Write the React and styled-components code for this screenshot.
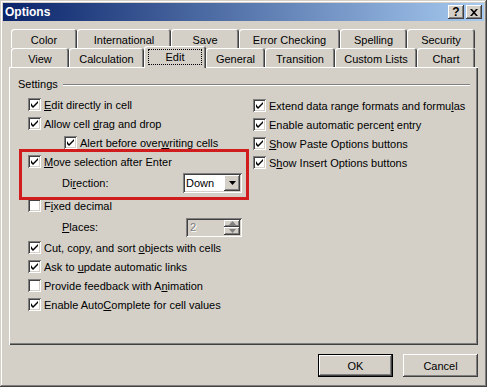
import React from "react";
import styled, { createGlobalStyle } from "styled-components";

const GlobalStyle = createGlobalStyle`
  html, body {
    margin: 0;
    padding: 0;
    background: #d4d0c8;
  }
  body {
    font-family: "Liberation Sans", Arial, sans-serif;
    font-size: 11px;
    color: #000;
  }
`;

const bevelOut = `
  box-shadow: inset -1px -1px #404040, inset 1px 1px #ffffff,
    inset -2px -2px #808080, inset 2px 2px #d4d0c8;
`;

const Window = styled.div`
  width: 487px;
  height: 387px;
  box-sizing: border-box;
  padding: 3px;
  background: #d4d0c8;
  display: flex;
  flex-direction: column;
  box-shadow: inset -1px -1px #404040, inset 1px 1px #d4d0c8,
    inset -2px -2px #808080, inset 2px 2px #ffffff;
`;

const TitleBar = styled.div`
  height: 18px;
  display: flex;
  align-items: center;
  justify-content: space-between;
  padding: 0 2px 0 2px;
  background: linear-gradient(to right, #0a246a, #a6caf0);
`;

const TitleText = styled.span`
  color: #fff;
  font-weight: bold;
  font-size: 12px;
`;

const CaptionButtons = styled.div`
  display: flex;
  gap: 2px;
`;

const CaptionButton = styled.div`
  width: 16px;
  height: 14px;
  background: #d4d0c8;
  ${bevelOut}
  display: flex;
  align-items: center;
  justify-content: center;
  font-weight: bold;
  font-size: 12px;
  line-height: 14px;
`;

const Body = styled.div`
  padding: 8px 6px 0 6px;
  display: flex;
  flex-direction: column;
`;

const TabRows = styled.div`
  padding-left: 2px;
  display: flex;
  flex-direction: column;
  position: relative;
  z-index: 1;
`;

const TabRow = styled.div`
  display: flex;
  height: 19px;
`;

const Tab = styled.div`
  width: ${(p) => p.$w}px;
  height: ${(p) => (p.$active ? 22 : 19)}px;
  margin-top: ${(p) => (p.$active ? -2 : 0)}px;
  box-sizing: border-box;
  flex: none;
  background: #d4d0c8;
  border-radius: 3px 3px 0 0;
  box-shadow: inset 1px 1px #ffffff, inset -1px 0 #404040, inset -2px 0 #808080;
  display: flex;
  align-items: center;
  justify-content: center;
  padding-top: ${(p) => (p.$active ? 0 : 2)}px;
`;

const FocusText = styled.span`
  width: 54px;
  height: 16px;
  box-sizing: border-box;
  border: 1px dotted #000;
  display: flex;
  align-items: center;
  justify-content: center;
`;

const Panel = styled.div`
  height: 278px;
  box-sizing: border-box;
  background: #d4d0c8;
  padding: 9px 0 0 9px;
  box-shadow: inset 1px 1px #ffffff, inset -1px -1px #404040,
    inset -2px -2px #808080;
  display: flex;
  flex-direction: column;
`;

const GroupHeader = styled.div`
  height: 16px;
  display: flex;
  align-items: center;
  gap: 5px;
  margin-right: 8px;
`;

const GroupLine = styled.div`
  flex: 1;
  border-top: 1px solid #808080;
  border-bottom: 1px solid #ffffff;
  margin-top: 1px;
`;

const Columns = styled.div`
  display: grid;
  grid-template-columns: 225px 1fr;
  padding-left: 10px;
  margin-top: 3px;
`;

const Column = styled.div`
  display: flex;
  flex-direction: column;
  position: relative;
  padding-top: ${(p) => p.$offset || 0}px;
`;

const Row = styled.div`
  height: ${(p) => p.$h || 19}px;
  display: flex;
  align-items: center;
  padding-left: ${(p) => p.$indent || 0}px;
  padding-right: ${(p) => p.$right || 0}px;
  justify-content: ${(p) => (p.$spread ? "space-between" : "flex-start")};
  white-space: nowrap;
`;

const Box = styled.span`
  width: 13px;
  height: 13px;
  flex: none;
  box-sizing: border-box;
  background: #fff;
  box-shadow: inset 1px 1px #808080, inset -1px -1px #ffffff,
    inset 2px 2px #404040, inset -2px -2px #d4d0c8;
  display: flex;
  align-items: center;
  justify-content: center;
`;

const Label = styled.span`
  margin-left: 3px;
  color: ${(p) => (p.$disabled ? "#808080" : "#000")};
`;

const Highlight = styled.div`
  position: absolute;
  left: -9px;
  top: 54px;
  width: 230px;
  height: 51px;
  box-sizing: border-box;
  border: 3px solid #d01c1c;
  pointer-events: none;
`;

const Combo = styled.div`
  width: 59px;
  height: 20px;
  box-sizing: border-box;
  background: #fff;
  box-shadow: inset 1px 1px #808080, inset -1px -1px #ffffff,
    inset 2px 2px #404040, inset -2px -2px #d4d0c8;
  display: flex;
  align-items: center;
  padding: 2px;
`;

const ComboText = styled.span`
  flex: 1;
  padding-left: 1px;
`;

const ArrowButton = styled.div`
  width: 16px;
  height: 16px;
  background: #d4d0c8;
  ${bevelOut}
  display: flex;
  align-items: center;
  justify-content: center;
`;

const Spinner = styled.div`
  width: 56px;
  height: 19px;
  box-sizing: border-box;
  background: #d4d0c8;
  box-shadow: inset 1px 1px #808080, inset -1px -1px #ffffff,
    inset 2px 2px #404040, inset -2px -2px #d4d0c8;
  display: flex;
  align-items: stretch;
  padding: 2px;
`;

const SpinText = styled.span`
  flex: 1;
  color: #808080;
  display: flex;
  align-items: center;
  padding-left: 2px;
  text-shadow: 1px 1px #fff;
`;

const SpinButtons = styled.div`
  width: 16px;
  display: flex;
  flex-direction: column;
`;

const SpinButton = styled.div`
  flex: 1;
  background: #d4d0c8;
  ${bevelOut}
  display: flex;
  align-items: center;
  justify-content: center;
`;

const Footer = styled.div`
  display: flex;
  justify-content: flex-end;
  gap: 10px;
  margin-top: 9px;
`;

const Button = styled.div`
  width: 75px;
  height: 23px;
  box-sizing: border-box;
  background: #d4d0c8;
  display: flex;
  align-items: center;
  justify-content: center;
  ${(p) =>
    p.$default
      ? `border: 1px solid #000;
         box-shadow: inset -1px -1px #404040, inset 1px 1px #ffffff,
           inset -2px -2px #808080;`
      : bevelOut}
`;

const Check = () => (
  <svg width="7" height="7" viewBox="0 0 7 7">
    <path d="M0 2 L0 5 L2 7 L7 2 L7 0 L2 5 Z" fill="#000" />
  </svg>
);

const Checkbox = ({ checked, children }) => (
  <>
    <Box>{checked && <Check />}</Box>
    <Label>{children}</Label>
  </>
);

const Tri = ({ up, color = "#000" }) => (
  <svg width="7" height="4" viewBox="0 0 7 4">
    <path d={up ? "M3.5 0 L7 4 L0 4 Z" : "M0 0 L7 0 L3.5 4 Z"} fill={color} />
  </svg>
);

const row1 = [
  ["Color", 66],
  ["International", 94],
  ["Save", 68],
  ["Error Checking", 101],
  ["Spelling", 67],
  ["Security", 68],
];

const row2 = [
  ["View", 58],
  ["Calculation", 75],
  ["Edit", 62],
  ["General", 59],
  ["Transition", 70],
  ["Custom Lists", 82],
  ["Chart", 58],
];

export default function App() {
  return (
    <>
      <GlobalStyle />
      <Window>
        <TitleBar>
          <TitleText>Options</TitleText>
          <CaptionButtons>
            <CaptionButton>?</CaptionButton>
            <CaptionButton>
              <svg width="8" height="7" viewBox="0 0 8 7">
                <path d="M0 0h2l2 2.3L6 0h2L5 3.5L8 7H6L4 4.7L2 7H0l3-3.5z" fill="#000" />
              </svg>
            </CaptionButton>
          </CaptionButtons>
        </TitleBar>
        <Body>
          <TabRows>
            <TabRow>
              {row1.map(([t, w]) => (
                <Tab key={t} $w={w}>{t}</Tab>
              ))}
            </TabRow>
            <TabRow>
              {row2.map(([t, w]) =>
                t === "Edit" ? (
                  <Tab key={t} $w={w} $active>
                    <FocusText>{t}</FocusText>
                  </Tab>
                ) : (
                  <Tab key={t} $w={w}>{t}</Tab>
                )
              )}
            </TabRow>
          </TabRows>
          <Panel>
            <GroupHeader>
              <span>Settings</span>
              <GroupLine />
            </GroupHeader>
            <Columns>
              <Column>
                <Row>
                  <Checkbox checked><u>E</u>dit directly in cell</Checkbox>
                </Row>
                <Row>
                  <Checkbox checked>Allow cell <u>d</u>rag and drop</Checkbox>
                </Row>
                <Row $indent={36}>
                  <Checkbox checked>Alert before over<u>w</u>riting cells</Checkbox>
                </Row>
                <Row>
                  <Checkbox checked><u>M</u>ove selection after Enter</Checkbox>
                </Row>
                <Row $h={24} $indent={34} $right={11} $spread>
                  <span>Di<u>r</u>ection:</span>
                  <Combo>
                    <ComboText>Down</ComboText>
                    <ArrowButton>
                      <Tri />
                    </ArrowButton>
                  </Combo>
                </Row>
                <Row $h={21}>
                  <Checkbox>F<u>i</u>xed decimal</Checkbox>
                </Row>
                <Row $h={22} $indent={34} $right={11} $spread>
                  <span><u>P</u>laces:</span>
                  <Spinner>
                    <SpinText>2</SpinText>
                    <SpinButtons>
                      <SpinButton><Tri up color="#808080" /></SpinButton>
                      <SpinButton><Tri color="#808080" /></SpinButton>
                    </SpinButtons>
                  </Spinner>
                </Row>
                <Row>
                  <Checkbox checked>Cut, copy, and sort <u>o</u>bjects with cells</Checkbox>
                </Row>
                <Row>
                  <Checkbox checked>Ask to <u>u</u>pdate automatic links</Checkbox>
                </Row>
                <Row>
                  <Checkbox>Provide feedback with A<u>n</u>imation</Checkbox>
                </Row>
                <Row>
                  <Checkbox checked>Enable Auto<u>C</u>omplete for cell values</Checkbox>
                </Row>
                <Highlight />
              </Column>
              <Column $offset={1}>
                <Row>
                  <Checkbox checked>Extend data range formats and formu<u>l</u>as</Checkbox>
                </Row>
                <Row>
                  <Checkbox checked>Enable automatic percen<u>t</u> entry</Checkbox>
                </Row>
                <Row>
                  <Checkbox checked><u>S</u>how Paste Options buttons</Checkbox>
                </Row>
                <Row>
                  <Checkbox checked>S<u>h</u>ow Insert Options buttons</Checkbox>
                </Row>
              </Column>
            </Columns>
          </Panel>
          <Footer>
            <Button $default>OK</Button>
            <Button>Cancel</Button>
          </Footer>
        </Body>
      </Window>
    </>
  );
}
